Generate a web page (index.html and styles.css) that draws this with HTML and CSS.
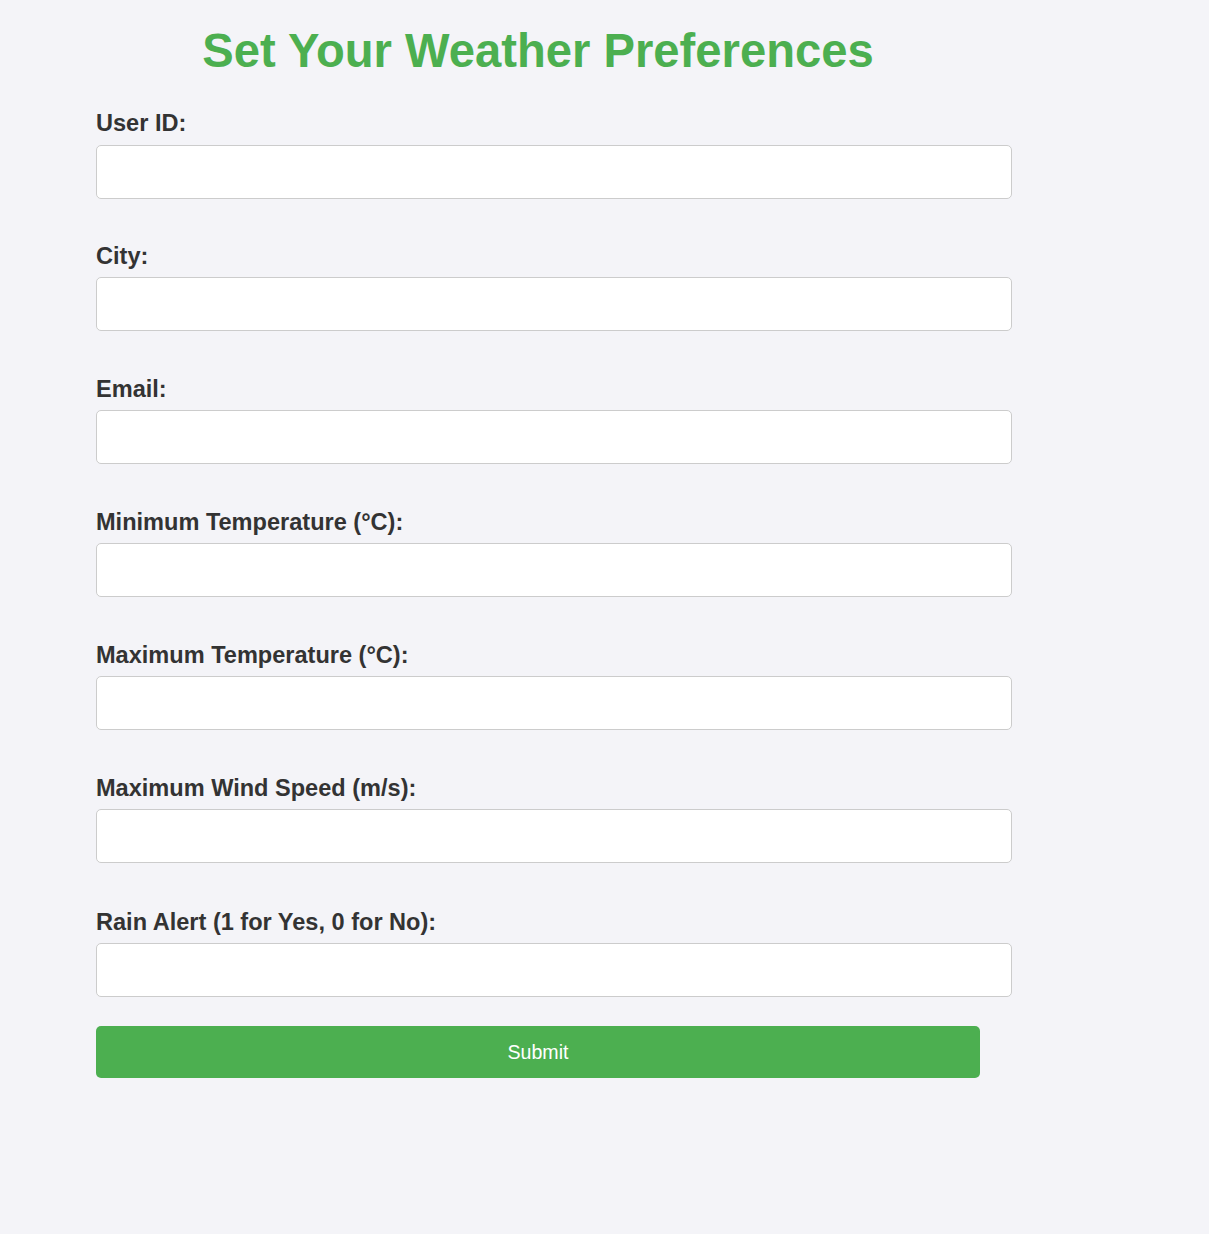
FILE: index.html
```html
<!DOCTYPE html>
<html lang="en">
<head>
<meta charset="UTF-8">
<title>Set Your Weather Preferences</title>
<link rel="stylesheet" href="styles.css">
</head>
<body>
<div class="container">
  <h1 class="title">Set Your Weather Preferences</h1>
  <form class="form">
    <div class="field field-first">
      <label class="label" for="user_id">User ID:</label>
      <input class="input" type="text" id="user_id">
    </div>
    <div class="field">
      <label class="label" for="city">City:</label>
      <input class="input" type="text" id="city">
    </div>
    <div class="field">
      <label class="label" for="email">Email:</label>
      <input class="input" type="email" id="email">
    </div>
    <div class="field">
      <label class="label" for="min_temp">Minimum Temperature (°C):</label>
      <input class="input" type="text" id="min_temp">
    </div>
    <div class="field">
      <label class="label" for="max_temp">Maximum Temperature (°C):</label>
      <input class="input" type="text" id="max_temp">
    </div>
    <div class="field field-sixth">
      <label class="label" for="max_wind">Maximum Wind Speed (m/s):</label>
      <input class="input" type="text" id="max_wind">
    </div>
    <div class="field field-last">
      <label class="label" for="rain">Rain Alert (1 for Yes, 0 for No):</label>
      <input class="input" type="text" id="rain">
    </div>
    <button class="submit" type="button">Submit</button>
  </form>
</div>
</body>
</html>
```

FILE: styles.css
```css
html, body {
  margin: 0;
  padding: 0;
}
body {
  background: #f4f4f8;
  font-family: "Liberation Sans", Arial, sans-serif;
  color: #333;
  min-height: 1234px;
}
.container {
  width: 884px;
  margin-left: 96px;
  padding-top: 24px;
}
.title {
  margin: 0 0 32px 0;
  font-size: 47.2px;
  line-height: 54px;
  font-weight: bold;
  color: #4caf50;
  text-align: center;
}
.form {
  display: flex;
  flex-direction: column;
}
.field {
  display: flex;
  flex-direction: column;
  margin-bottom: 44px;
}
.field-first {
  margin-bottom: 43px;
}
.field-sixth {
  margin-bottom: 45px;
}
.field-last {
  margin-bottom: 29px;
}
.label {
  display: block;
  font-size: 23.55px;
  line-height: 27px;
  font-weight: bold;
  color: #333;
  padding-top: 1px;
  margin-bottom: 7px;
}
.field-first .label {
  padding-top: 0;
  margin-bottom: 8px;
}
.input {
  display: block;
  width: 100%;
  height: 22px;
  padding: 15px;
  margin: 0;
  border: 1px solid #ccc;
  border-radius: 5px;
  background: #fff;
  font-family: "Liberation Sans", Arial, sans-serif;
  font-size: 18px;
  box-sizing: content-box;
}
.submit {
  display: block;
  width: 884px;
  height: 52px;
  margin: 0;
  padding: 0;
  border: none;
  border-radius: 5px;
  background: #4caf50;
  color: #fff;
  font-family: "Liberation Sans", Arial, sans-serif;
  font-size: 19.6px;
  cursor: pointer;
}
```
